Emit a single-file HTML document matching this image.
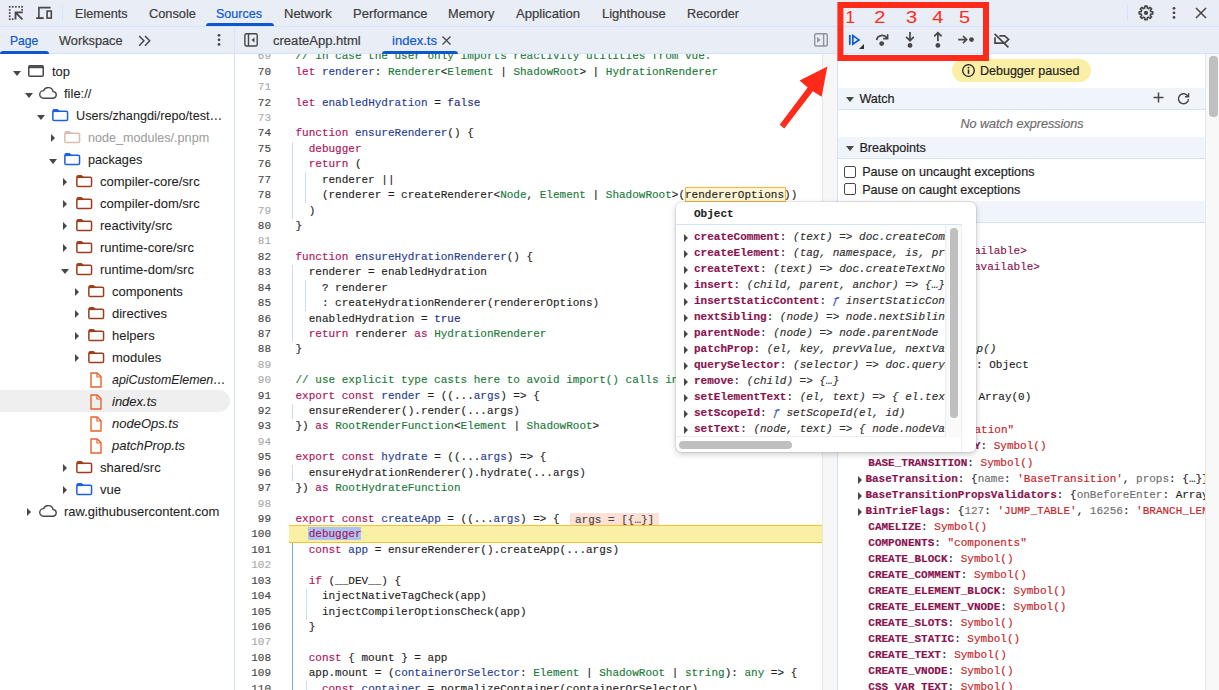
<!DOCTYPE html>
<html><head><meta charset="utf-8">
<style>
*{margin:0;padding:0;box-sizing:border-box}
html,body{width:1219px;height:690px;overflow:hidden;background:#fff;font-family:"Liberation Sans",sans-serif;color:#1f1f1f}
.tab,.sec span,.badge span,.cbt,.nowatch{-webkit-text-stroke:0.2px currentColor}
.tt{-webkit-text-stroke:0.08px currentColor}
.num,.src,.sr{-webkit-text-stroke:0.15px currentColor}
.abs{position:absolute}
#tb1{position:absolute;left:0;top:0;width:1219px;height:27px;background:#e9eef6;border-bottom:1px solid #d3e3fd}
#tb2{position:absolute;left:0;top:27px;width:1219px;height:27px;background:#e9eef6;border-bottom:1px solid #d3e3fd}
.tab{position:absolute;top:7px;font-size:12.6px;color:#3c3c3c;white-space:nowrap;line-height:14px}
.sel{color:#0b57d0}
.uline{position:absolute;height:3px;background:#0b57d0;border-radius:3px 3px 0 0}
.vsep{position:absolute;width:1px;background:#d3e3fd}
/* tree */
#tree{position:absolute;left:0;top:54px;width:234px;height:636px;background:#fff;overflow:hidden}
.tt{position:absolute;height:22px;font-size:13px;line-height:22px;white-space:nowrap;color:#1f1f1f}
.tt.faded{color:#9e9e9e}
.tt.it{font-style:italic}
.tri{position:absolute;width:0;height:0}
.tri.d{border-left:4px solid transparent;border-right:4px solid transparent;border-top:5px solid #474747}
.tri.r{border-top:4px solid transparent;border-bottom:4px solid transparent;border-left:4.5px solid #474747}
/* code */
#editor{position:absolute;left:234px;top:54px;width:603px;height:636px;background:#fff;overflow:hidden;border-left:1px solid #d3e3fd}
.num,.src{position:absolute;font-family:"Liberation Mono",monospace;font-size:11px;line-height:15.4px;white-space:pre;height:15.4px}
.num{right:566px;color:#474747;text-align:right}
.num.l{color:#ababab}
.src{left:60.5px;color:#1f1f1f}
.k{color:#b0105a}
.d{color:#1f3c96}
.ty{color:#1b7a3a}
.c{color:#1b7a3a}
.a{color:#1f2d80}
.g{position:absolute;width:1px;background:#cddcf6}
.ga{background:#7aa3f0}
.hlbox{}
.hlb{position:absolute;left:450px;top:133px;width:101px;height:14.5px;background:#fdf5d4;border:1px solid #f2b940}
.selw{}
.selb{position:absolute;left:73px;top:473px;width:53px;height:13px;background:#a9c4f3}
.curline{position:absolute;left:54px;width:533px;height:17.4px;background:#f9efa5;border-top:1px solid #f5c232;border-bottom:1px solid #f5c232}
.inl{position:absolute;left:335px;height:12.5px;padding:0 5px;background:#fde0d6;color:#474747;font-family:"Liberation Mono",monospace;font-size:11px;line-height:14.3px;white-space:pre;overflow:hidden;-webkit-text-stroke:0.15px currentColor}
#vscroll{position:absolute;left:587px;top:0;width:15px;height:636px;background:#f7f7f7;border-left:1px solid #e6e6e6}
/* right */
#right{position:absolute;left:837px;top:54px;width:382px;height:636px;background:#fff;border-left:1px solid #d3e3fd;overflow:hidden}

.badge{position:absolute;left:114px;top:5px;width:139px;height:23px;border-radius:12px;background:#fbefa5;font-size:12.8px;line-height:23px;color:#1f1f1f}
.badge span{position:absolute;left:28px;top:0.8px;font-size:12.5px}
.sec{position:absolute;left:0;width:367px;height:22px;background:#f0f4fb;border-bottom:1px solid #d3e3fd;font-size:12.8px;line-height:23px}
.sec span{position:absolute;left:21.4px;top:0;font-size:12.6px}
.stri{position:absolute;left:8.2px;top:9px;width:0;height:0;border-left:4px solid transparent;border-right:4px solid transparent;border-top:5px solid #474747}
.nowatch{position:absolute;left:0;top:55.6px;width:368px;text-align:center;font-size:12.6px;font-style:italic;color:#6e6e6e;line-height:28px}
.cb{position:absolute;left:6.2px;width:12px;height:12px;border:1px solid #474747;border-radius:2px;background:#fff}
.cbt{position:absolute;left:24.2px;font-size:12.6px;line-height:18px;white-space:nowrap}
#rscroll{position:absolute;left:367px;top:0;width:15px;height:636px;background:#f8f8f8;border-left:1px solid #e8e8e8}
#rthumb{position:absolute;left:3px;top:2px;width:8.5px;height:61px;border-radius:4px;background:#bfbfbf}
.sr{position:absolute;left:0;height:16px;font-family:"Liberation Mono",monospace;font-size:11px;line-height:16px;white-space:pre;color:#1f1f1f}
.nm{color:#881350;font-weight:bold}
.st{color:#c5221f}
.gr{color:#6e6e6e}
.itl{font-style:italic}
.str{position:absolute;width:0;height:0;border-top:4px solid transparent;border-bottom:4px solid transparent;border-left:4.3px solid #474747}

#popup{position:absolute;left:676px;top:202px;width:300px;height:250px;background:#fff;border-radius:6px;box-shadow:0 0 0 1px rgba(0,0,0,.06),0 2px 6px rgba(0,0,0,.22);overflow:hidden}
#phdr{position:absolute;left:0;top:22px;width:285px;height:1px;background:#d3e3fd}
#plist{position:absolute;left:0;top:23px;width:270px;height:212px;overflow:hidden;border-bottom:1px solid #ececec;border-right:1px solid #ececec}
#pvtrack{position:absolute;left:270px;top:23px;width:15px;height:212px;background:#fafafa}
#pvthumb{position:absolute;left:4px;top:3px;width:8px;height:190px;border-radius:4px;background:#bfbfbf}
#phthumb{position:absolute;left:3px;top:239px;width:113px;height:8px;border-radius:4px;background:#bfbfbf}
#pline{position:absolute;left:284.5px;top:22px;width:1px;height:228px;background:#efefef}
.fn{color:#1f4fbf}
</style></head><body>
<!-- TOP TOOLBAR -->
<div id="tb1">
  <svg class="abs" style="left:0;top:0" width="60" height="27" viewBox="0 0 60 27">
<g fill="#474747"><rect x="8.85" y="5.95" width="1.7" height="1.7"/><rect x="11.85" y="5.95" width="1.7" height="1.7"/><rect x="15.05" y="5.95" width="1.7" height="1.7"/><rect x="18.35" y="5.95" width="1.7" height="1.7"/><rect x="21.25" y="5.95" width="1.7" height="1.7"/><rect x="8.85" y="9.15" width="1.7" height="1.7"/><rect x="8.85" y="12.15" width="1.7" height="1.7"/><rect x="8.85" y="15.35" width="1.7" height="1.7"/><rect x="8.85" y="18.35" width="1.7" height="1.7"/><rect x="11.85" y="18.35" width="1.7" height="1.7"/><rect x="21.25" y="8.95" width="1.7" height="1.7"/></g>
<path d="M22.8 12.4H15.5V19.6M15.7 12.6L22.4 19.3" fill="none" stroke="#474747" stroke-width="1.8"/>
<path d="M38.9 18.1V7.6H50.6" fill="none" stroke="#474747" stroke-width="1.6"/>
<path d="M36.2 18.1H43.7" fill="none" stroke="#474747" stroke-width="1.9"/>
<rect x="47.1" y="11.1" width="4.2" height="7" fill="none" stroke="#474747" stroke-width="1.6"/>
</svg>
  <div class="vsep" style="left:62px;top:5px;height:16px"></div>
  <div class="tab" style="left:75px;font-size:12.6px">Elements</div>
  <div class="tab" style="left:149px;font-size:12.8px">Console</div>
  <div class="tab sel" style="left:216px;font-size:12.55px">Sources</div>
  <div class="tab" style="left:284px;font-size:13.0px">Network</div>
  <div class="tab" style="left:353px;font-size:13.0px">Performance</div>
  <div class="tab" style="left:448px;font-size:12.85px">Memory</div>
  <div class="tab" style="left:516px;font-size:13.1px">Application</div>
  <div class="tab" style="left:602px;font-size:13.0px">Lighthouse</div>
  <div class="tab" style="left:687px;font-size:12.65px">Recorder</div>
  <div class="uline" style="left:206px;top:23px;width:68px"></div>
  <div class="vsep" style="left:1127px;top:5px;height:16px"></div>
  <svg class="abs" style="left:0;top:0" width="1219" height="27" viewBox="0 0 1219 27"><path d="M1150.84 11.64 L1152.81 11.78 L1152.81 14.02 L1150.84 14.16 L1150.31 15.43 L1151.61 16.92 L1150.02 18.51 L1148.53 17.21 L1147.26 17.74 L1147.12 19.71 L1144.88 19.71 L1144.74 17.74 L1143.47 17.21 L1141.98 18.51 L1140.39 16.92 L1141.69 15.43 L1141.16 14.16 L1139.19 14.02 L1139.19 11.78 L1141.16 11.64 L1141.69 10.37 L1140.39 8.88 L1141.98 7.29 L1143.47 8.59 L1144.74 8.06 L1144.88 6.09 L1147.12 6.09 L1147.26 8.06 L1148.53 8.59 L1150.02 7.29 L1151.61 8.88 L1150.31 10.37Z" fill="none" stroke="#474747" stroke-width="1.6" stroke-linejoin="round"/><circle cx="1146" cy="12.9" r="2.1" fill="#474747"/></svg>
  <svg class="abs" style="left:1171px;top:6px" width="6" height="14" viewBox="0 0 6 14" fill="#474747"><circle cx="3" cy="2.3" r="1.4"/><circle cx="3" cy="6.8" r="1.4"/><circle cx="3" cy="11.4" r="1.4"/></svg>
  <svg class="abs" style="left:1195px;top:7px" width="12" height="12" viewBox="0 0 12 12" stroke="#474747" stroke-width="1.5"><path d="M1 1l10 10M11 1L1 11"/></svg>
</div>

<!-- SECOND ROW -->
<div id="tb2">
  <div class="tab sel" style="left:10px;top:7px;font-size:12.1px">Page</div>
  <div class="tab" style="left:59px;top:7px;font-size:12.75px">Workspace</div>
  <svg class="abs" style="left:137.5px;top:7.5px" width="14" height="12" viewBox="0 0 14 12" fill="none" stroke="#474747" stroke-width="1.5"><path d="M1.2 0.9l4.7 4.9-4.7 4.9M7 0.9l4.7 4.9-4.7 4.9"/></svg>
  <svg class="abs" style="left:216px;top:6.3px" width="6" height="14" viewBox="0 0 6 14" fill="#474747"><circle cx="3" cy="2.3" r="1.4"/><circle cx="3" cy="6.8" r="1.4"/><circle cx="3" cy="11.4" r="1.4"/></svg>
  <div class="uline" style="left:0;top:24px;width:49px"></div>
  <div class="vsep" style="left:234px;top:0;height:27px"></div>
  <svg class="abs" style="left:244px;top:6px" width="15" height="14" viewBox="0 0 15 14" fill="none" stroke="#474747" stroke-width="1.4"><rect x="0.9" y="0.7" width="12.3" height="12.3" rx="1.5"/><path d="M4.5 1v12"/><path d="M10.5 4.5v5l-3-2.5z" fill="#474747" stroke="none"/></svg>
  <div class="tab" style="left:273px;top:7px;font-size:13.05px">createApp.html</div>
  <div class="tab sel" style="left:392px;top:7px;font-size:13.05px">index.ts</div>
  <svg class="abs" style="left:442px;top:9px" width="9" height="9" viewBox="0 0 9 9" stroke="#474747" stroke-width="1.3"><path d="M0.5 0.5l8 8M8.5 0.5l-8 8"/></svg>
  <div class="uline" style="left:382px;top:24px;width:76px"></div>
  <svg class="abs" style="left:814px;top:6px" width="15" height="14" viewBox="0 0 15 14" fill="none" stroke="#909399" stroke-width="1.4"><rect x="0.7" y="0.7" width="12.6" height="12.3" rx="1.5"/><path d="M9.6 1v12"/><path d="M3.1 3.8v6.2l3.4-3.1z" fill="#909399" stroke="none"/></svg>
</div>

<div id="tree"><div class="tri d" style="left:13px;top:17px"></div><div class="abs" style="left:28px;top:11px;line-height:0"><svg width="16" height="12" viewBox="0 0 16 12" fill="none" stroke="#474747" stroke-width="1.5"><rect x="0.75" y="0.75" width="14.5" height="10.5" rx="1.2"/><path d="M0.75 2.2h14.5" stroke-width="2"/></svg></div><div class="tt" style="left:52px;top:7px">top</div>
<div class="tri d" style="left:25px;top:39px"></div><div class="abs" style="left:39px;top:33px;line-height:0"><svg width="18" height="12" viewBox="0 0 18 12" fill="none" stroke="#474747" stroke-width="1.4"><path d="M4.5 11.2h9.2a3.3 3.3 0 0 0 .4-6.6A5 5 0 0 0 4.6 3.6 3.8 3.8 0 0 0 4.5 11.2z" stroke-linejoin="round"/></svg></div><div class="tt" style="left:64px;top:29px">file://</div>
<div class="tri d" style="left:37px;top:61px"></div><div class="abs" style="left:52px;top:55px;line-height:0"><svg width="17" height="13" viewBox="0 0 17 13" fill="none" stroke="#1a5fe0" stroke-width="1.5"><rect x="0.85" y="2.3" width="14.7" height="9.3" rx="1.3"/><path d="M0.85 2.6V1.6Q0.85 0.6 1.8 0.6H5.9L7.6 2.6Z" fill="#1a5fe0" stroke-width="1" stroke-linejoin="round"/></svg></div><div class="tt" style="left:76px;top:51px;font-size:12.65px">Users/zhangdi/repo/test…</div>
<div class="tri r" style="left:51px;top:80px"></div><div class="abs" style="left:64px;top:77px;line-height:0"><svg width="17" height="13" viewBox="0 0 17 13" fill="none" stroke="#dcbcb0" stroke-width="1.5"><rect x="0.85" y="2.3" width="14.7" height="9.3" rx="1.3"/><path d="M0.85 2.6V1.6Q0.85 0.6 1.8 0.6H5.9L7.6 2.6Z" fill="#dcbcb0" stroke-width="1" stroke-linejoin="round"/></svg></div><div class="tt faded" style="left:88px;top:73px;font-size:12.6px">node_modules/.pnpm</div>
<div class="tri d" style="left:49px;top:105px"></div><div class="abs" style="left:64px;top:99px;line-height:0"><svg width="17" height="13" viewBox="0 0 17 13" fill="none" stroke="#1a5fe0" stroke-width="1.5"><rect x="0.85" y="2.3" width="14.7" height="9.3" rx="1.3"/><path d="M0.85 2.6V1.6Q0.85 0.6 1.8 0.6H5.9L7.6 2.6Z" fill="#1a5fe0" stroke-width="1" stroke-linejoin="round"/></svg></div><div class="tt" style="left:88px;top:95px;font-size:12.7px">packages</div>
<div class="tri r" style="left:63px;top:124px"></div><div class="abs" style="left:76px;top:121px;line-height:0"><svg width="17" height="13" viewBox="0 0 17 13" fill="none" stroke="#9c3d1c" stroke-width="1.5"><rect x="0.85" y="2.3" width="14.7" height="9.3" rx="1.3"/><path d="M0.85 2.6V1.6Q0.85 0.6 1.8 0.6H5.9L7.6 2.6Z" fill="#9c3d1c" stroke-width="1" stroke-linejoin="round"/></svg></div><div class="tt" style="left:100px;top:117px">compiler-core/src</div>
<div class="tri r" style="left:63px;top:146px"></div><div class="abs" style="left:76px;top:143px;line-height:0"><svg width="17" height="13" viewBox="0 0 17 13" fill="none" stroke="#9c3d1c" stroke-width="1.5"><rect x="0.85" y="2.3" width="14.7" height="9.3" rx="1.3"/><path d="M0.85 2.6V1.6Q0.85 0.6 1.8 0.6H5.9L7.6 2.6Z" fill="#9c3d1c" stroke-width="1" stroke-linejoin="round"/></svg></div><div class="tt" style="left:100px;top:139px">compiler-dom/src</div>
<div class="tri r" style="left:63px;top:168px"></div><div class="abs" style="left:76px;top:165px;line-height:0"><svg width="17" height="13" viewBox="0 0 17 13" fill="none" stroke="#9c3d1c" stroke-width="1.5"><rect x="0.85" y="2.3" width="14.7" height="9.3" rx="1.3"/><path d="M0.85 2.6V1.6Q0.85 0.6 1.8 0.6H5.9L7.6 2.6Z" fill="#9c3d1c" stroke-width="1" stroke-linejoin="round"/></svg></div><div class="tt" style="left:100px;top:161px">reactivity/src</div>
<div class="tri r" style="left:63px;top:190px"></div><div class="abs" style="left:76px;top:187px;line-height:0"><svg width="17" height="13" viewBox="0 0 17 13" fill="none" stroke="#9c3d1c" stroke-width="1.5"><rect x="0.85" y="2.3" width="14.7" height="9.3" rx="1.3"/><path d="M0.85 2.6V1.6Q0.85 0.6 1.8 0.6H5.9L7.6 2.6Z" fill="#9c3d1c" stroke-width="1" stroke-linejoin="round"/></svg></div><div class="tt" style="left:100px;top:183px">runtime-core/src</div>
<div class="tri d" style="left:61px;top:215px"></div><div class="abs" style="left:76px;top:209px;line-height:0"><svg width="17" height="13" viewBox="0 0 17 13" fill="none" stroke="#9c3d1c" stroke-width="1.5"><rect x="0.85" y="2.3" width="14.7" height="9.3" rx="1.3"/><path d="M0.85 2.6V1.6Q0.85 0.6 1.8 0.6H5.9L7.6 2.6Z" fill="#9c3d1c" stroke-width="1" stroke-linejoin="round"/></svg></div><div class="tt" style="left:100px;top:205px">runtime-dom/src</div>
<div class="tri r" style="left:75px;top:234px"></div><div class="abs" style="left:88px;top:231px;line-height:0"><svg width="17" height="13" viewBox="0 0 17 13" fill="none" stroke="#9c3d1c" stroke-width="1.5"><rect x="0.85" y="2.3" width="14.7" height="9.3" rx="1.3"/><path d="M0.85 2.6V1.6Q0.85 0.6 1.8 0.6H5.9L7.6 2.6Z" fill="#9c3d1c" stroke-width="1" stroke-linejoin="round"/></svg></div><div class="tt" style="left:112px;top:227px">components</div>
<div class="tri r" style="left:75px;top:256px"></div><div class="abs" style="left:88px;top:253px;line-height:0"><svg width="17" height="13" viewBox="0 0 17 13" fill="none" stroke="#9c3d1c" stroke-width="1.5"><rect x="0.85" y="2.3" width="14.7" height="9.3" rx="1.3"/><path d="M0.85 2.6V1.6Q0.85 0.6 1.8 0.6H5.9L7.6 2.6Z" fill="#9c3d1c" stroke-width="1" stroke-linejoin="round"/></svg></div><div class="tt" style="left:112px;top:249px">directives</div>
<div class="tri r" style="left:75px;top:278px"></div><div class="abs" style="left:88px;top:275px;line-height:0"><svg width="17" height="13" viewBox="0 0 17 13" fill="none" stroke="#9c3d1c" stroke-width="1.5"><rect x="0.85" y="2.3" width="14.7" height="9.3" rx="1.3"/><path d="M0.85 2.6V1.6Q0.85 0.6 1.8 0.6H5.9L7.6 2.6Z" fill="#9c3d1c" stroke-width="1" stroke-linejoin="round"/></svg></div><div class="tt" style="left:112px;top:271px">helpers</div>
<div class="tri r" style="left:75px;top:300px"></div><div class="abs" style="left:88px;top:297px;line-height:0"><svg width="17" height="13" viewBox="0 0 17 13" fill="none" stroke="#9c3d1c" stroke-width="1.5"><rect x="0.85" y="2.3" width="14.7" height="9.3" rx="1.3"/><path d="M0.85 2.6V1.6Q0.85 0.6 1.8 0.6H5.9L7.6 2.6Z" fill="#9c3d1c" stroke-width="1" stroke-linejoin="round"/></svg></div><div class="tt" style="left:112px;top:293px">modules</div>
<div class="abs" style="left:90px;top:318px;line-height:0"><svg width="12" height="16" viewBox="0 0 12 16" fill="none" stroke="#e8632b" stroke-width="1.4"><path d="M1 1h6.3L11 4.7V15H1z" stroke-linejoin="round"/><path d="M7 1v4h4" stroke-width="1.2"/></svg></div><div class="tt it" style="left:112px;top:315px;font-size:12.4px">apiCustomElemen…</div>
<div class="abs" style="left:0;top:336px;width:230px;height:22px;background:#efefef;border-radius:0 11px 11px 0"></div><div class="abs" style="left:90px;top:340px;line-height:0"><svg width="12" height="16" viewBox="0 0 12 16" fill="none" stroke="#e8632b" stroke-width="1.4"><path d="M1 1h6.3L11 4.7V15H1z" stroke-linejoin="round"/><path d="M7 1v4h4" stroke-width="1.2"/></svg></div><div class="tt it" style="left:112px;top:337px">index.ts</div>
<div class="abs" style="left:90px;top:362px;line-height:0"><svg width="12" height="16" viewBox="0 0 12 16" fill="none" stroke="#e8632b" stroke-width="1.4"><path d="M1 1h6.3L11 4.7V15H1z" stroke-linejoin="round"/><path d="M7 1v4h4" stroke-width="1.2"/></svg></div><div class="tt it" style="left:112px;top:359px">nodeOps.ts</div>
<div class="abs" style="left:90px;top:384px;line-height:0"><svg width="12" height="16" viewBox="0 0 12 16" fill="none" stroke="#e8632b" stroke-width="1.4"><path d="M1 1h6.3L11 4.7V15H1z" stroke-linejoin="round"/><path d="M7 1v4h4" stroke-width="1.2"/></svg></div><div class="tt it" style="left:112px;top:381px">patchProp.ts</div>
<div class="tri r" style="left:63px;top:410px"></div><div class="abs" style="left:76px;top:407px;line-height:0"><svg width="17" height="13" viewBox="0 0 17 13" fill="none" stroke="#9c3d1c" stroke-width="1.5"><rect x="0.85" y="2.3" width="14.7" height="9.3" rx="1.3"/><path d="M0.85 2.6V1.6Q0.85 0.6 1.8 0.6H5.9L7.6 2.6Z" fill="#9c3d1c" stroke-width="1" stroke-linejoin="round"/></svg></div><div class="tt" style="left:100px;top:403px">shared/src</div>
<div class="tri r" style="left:63px;top:432px"></div><div class="abs" style="left:76px;top:429px;line-height:0"><svg width="17" height="13" viewBox="0 0 17 13" fill="none" stroke="#1a5fe0" stroke-width="1.5"><rect x="0.85" y="2.3" width="14.7" height="9.3" rx="1.3"/><path d="M0.85 2.6V1.6Q0.85 0.6 1.8 0.6H5.9L7.6 2.6Z" fill="#1a5fe0" stroke-width="1" stroke-linejoin="round"/></svg></div><div class="tt" style="left:100px;top:425px">vue</div>
<div class="tri r" style="left:27px;top:454px"></div><div class="abs" style="left:39px;top:451px;line-height:0"><svg width="18" height="12" viewBox="0 0 18 12" fill="none" stroke="#474747" stroke-width="1.4"><path d="M4.5 11.2h9.2a3.3 3.3 0 0 0 .4-6.6A5 5 0 0 0 4.6 3.6 3.8 3.8 0 0 0 4.5 11.2z" stroke-linejoin="round"/></svg></div><div class="tt" style="left:64px;top:447px">raw.githubusercontent.com</div></div><div id="editor"><div class="g" style="left:57.39999999999998px;top:87.60px;height:77.10px"></div><div class="g" style="left:69.80000000000001px;top:118.44px;height:30.84px"></div><div class="g" style="left:57.39999999999998px;top:210.96px;height:77.10px"></div><div class="g" style="left:69.80000000000001px;top:226.38px;height:30.84px"></div><div class="g" style="left:57.39999999999998px;top:349.74px;height:15.42px"></div><div class="g" style="left:57.39999999999998px;top:411.42px;height:15.42px"></div><div class="g ga" style="left:57.39999999999998px;top:473.10px;height:185.04px"></div><div class="g" style="left:71.39999999999998px;top:534.78px;height:30.84px"></div><div class="g" style="left:71.39999999999998px;top:627.30px;height:30.84px"></div><div class="curline" style="top:471.2px"></div><div class="hlb"></div><div class="selb"></div><div class="inl" style="top:458.98px">args = [{…}]</div><div class="num l" style="top:-4.62px">69</div><div class="src" style="top:-4.62px"><span class="c">// in case the user only imports reactivity utilities from Vue.</span></div>
<div class="num" style="top:10.80px">70</div><div class="src" style="top:10.80px"><span class="k">let</span> <span class="d">renderer</span>: <span class="ty">Renderer</span>&lt;<span class="ty">Element</span> | <span class="ty">ShadowRoot</span>&gt; | <span class="ty">HydrationRenderer</span></div>
<div class="num l" style="top:26.22px">71</div><div class="src" style="top:26.22px"></div>
<div class="num" style="top:41.64px">72</div><div class="src" style="top:41.64px"><span class="k">let</span> <span class="d">enabledHydration</span> = <span class="a">false</span></div>
<div class="num l" style="top:57.06px">73</div><div class="src" style="top:57.06px"></div>
<div class="num" style="top:72.48px">74</div><div class="src" style="top:72.48px"><span class="k">function</span> <span class="d">ensureRenderer</span>() {</div>
<div class="num" style="top:87.90px">75</div><div class="src" style="top:87.90px">  <span class="k">debugger</span></div>
<div class="num" style="top:103.32px">76</div><div class="src" style="top:103.32px">  <span class="k">return</span> (</div>
<div class="num" style="top:118.74px">77</div><div class="src" style="top:118.74px">    renderer ||</div>
<div class="num" style="top:134.16px">78</div><div class="src" style="top:134.16px">    (renderer = createRenderer&lt;<span class="ty">Node</span>, <span class="ty">Element</span> | <span class="ty">ShadowRoot</span>&gt;(<span class="hlbox">rendererOptions</span>))</div>
<div class="num l" style="top:149.58px">79</div><div class="src" style="top:149.58px">  )</div>
<div class="num" style="top:165.00px">80</div><div class="src" style="top:165.00px">}</div>
<div class="num l" style="top:180.42px">81</div><div class="src" style="top:180.42px"></div>
<div class="num" style="top:195.84px">82</div><div class="src" style="top:195.84px"><span class="k">function</span> <span class="d">ensureHydrationRenderer</span>() {</div>
<div class="num" style="top:211.26px">83</div><div class="src" style="top:211.26px">  renderer = enabledHydration</div>
<div class="num" style="top:226.68px">84</div><div class="src" style="top:226.68px">    ? renderer</div>
<div class="num" style="top:242.10px">85</div><div class="src" style="top:242.10px">    : createHydrationRenderer(rendererOptions)</div>
<div class="num" style="top:257.52px">86</div><div class="src" style="top:257.52px">  enabledHydration = <span class="a">true</span></div>
<div class="num" style="top:272.94px">87</div><div class="src" style="top:272.94px">  <span class="k">return</span> renderer <span class="k">as</span> <span class="ty">HydrationRenderer</span></div>
<div class="num" style="top:288.36px">88</div><div class="src" style="top:288.36px">}</div>
<div class="num l" style="top:303.78px">89</div><div class="src" style="top:303.78px"></div>
<div class="num l" style="top:319.20px">90</div><div class="src" style="top:319.20px"><span class="c">// use explicit type casts here to avoid import() calls in rolled-up d.ts</span></div>
<div class="num" style="top:334.62px">91</div><div class="src" style="top:334.62px"><span class="k">export</span> <span class="k">const</span> <span class="d">render</span> = ((...<span class="d">args</span>) =&gt; {</div>
<div class="num" style="top:350.04px">92</div><div class="src" style="top:350.04px">  ensureRenderer().render(...args)</div>
<div class="num" style="top:365.46px">93</div><div class="src" style="top:365.46px">}) <span class="k">as</span> <span class="ty">RootRenderFunction</span>&lt;<span class="ty">Element</span> | <span class="ty">ShadowRoot</span>&gt;</div>
<div class="num l" style="top:380.88px">94</div><div class="src" style="top:380.88px"></div>
<div class="num" style="top:396.30px">95</div><div class="src" style="top:396.30px"><span class="k">export</span> <span class="k">const</span> <span class="d">hydrate</span> = ((...<span class="d">args</span>) =&gt; {</div>
<div class="num" style="top:411.72px">96</div><div class="src" style="top:411.72px">  ensureHydrationRenderer().hydrate(...args)</div>
<div class="num" style="top:427.14px">97</div><div class="src" style="top:427.14px">}) <span class="k">as</span> <span class="ty">RootHydrateFunction</span></div>
<div class="num l" style="top:442.56px">98</div><div class="src" style="top:442.56px"></div>
<div class="num" style="top:457.98px">99</div><div class="src" style="top:457.98px"><span class="k">export</span> <span class="k">const</span> <span class="d">createApp</span> = ((...<span class="d">args</span>) =&gt; {</div>
<div class="num" style="top:473.40px">100</div><div class="src" style="top:473.40px">  <span class="selw"><span class="k">debugger</span></span></div>
<div class="num" style="top:488.82px">101</div><div class="src" style="top:488.82px">  <span class="k">const</span> <span class="d">app</span> = ensureRenderer().createApp(...args)</div>
<div class="num l" style="top:504.24px">102</div><div class="src" style="top:504.24px"></div>
<div class="num" style="top:519.66px">103</div><div class="src" style="top:519.66px">  <span class="k">if</span> (__DEV__) {</div>
<div class="num" style="top:535.08px">104</div><div class="src" style="top:535.08px">    injectNativeTagCheck(app)</div>
<div class="num" style="top:550.50px">105</div><div class="src" style="top:550.50px">    injectCompilerOptionsCheck(app)</div>
<div class="num" style="top:565.92px">106</div><div class="src" style="top:565.92px">  }</div>
<div class="num l" style="top:581.34px">107</div><div class="src" style="top:581.34px"></div>
<div class="num" style="top:596.76px">108</div><div class="src" style="top:596.76px">  <span class="k">const</span> { mount } = app</div>
<div class="num" style="top:612.18px">109</div><div class="src" style="top:612.18px">  app.mount = (<span class="d">containerOrSelector</span>: <span class="ty">Element</span> | <span class="ty">ShadowRoot</span> | <span class="ty">string</span>): <span class="ty">any</span> =&gt; {</div>
<div class="num" style="top:627.60px">110</div><div class="src" style="top:627.60px">    <span class="k">const</span> <span class="d">container</span> = normalizeContainer(containerOrSelector)</div>
<div class="num" style="top:643.02px">111</div><div class="src" style="top:643.02px">    <span class="k">if</span> (!container) <span class="k">return</span></div><div id="vscroll"></div></div><div id="right">
  <div class="badge"><svg class="abs" style="left:10px;top:5px" width="13" height="13" viewBox="0 0 13 13" fill="none" stroke="#1f1f1f" stroke-width="1.3"><circle cx="6.5" cy="6.5" r="5.8"/><path d="M6.5 5.6v4.2" stroke-width="1.5"/><circle cx="6.5" cy="3.7" r="0.9" fill="#1f1f1f" stroke="none"/></svg><span>Debugger paused</span></div>
  <div class="sec" style="top:34px"><div class="stri"></div><span>Watch</span>
    <svg class="abs" style="left:315.3px;top:4.4px" width="11" height="11" viewBox="0 0 11 11" stroke="#474747" stroke-width="1.5"><path d="M5.5 0.5v10M0.5 5.5h10"/></svg>
    <svg class="abs" style="left:338.5px;top:3.5px" width="13" height="13" viewBox="0 0 13 13" fill="none" stroke="#474747" stroke-width="1.4"><path d="M10.8 4.2A5 5 0 1 0 11.5 7"/><path d="M11.6 1.2v3.6H8" fill="none"/></svg>
  </div>
  <div class="nowatch">No watch expressions</div>
  <div class="sec" style="top:83px"><div class="stri"></div><span>Breakpoints</span></div>
  <div class="cb" style="top:111.6px"></div><div class="cbt" style="top:109px">Pause on uncaught exceptions</div>
  <div class="cb" style="top:129px"></div><div class="cbt" style="top:126.6px">Pause on caught exceptions</div>
  <div class="sec" style="top:147px"><div class="stri"></div><span>Scope</span></div>
  <div class="sr" style="left:27.4px;top:172.67px"><span class="nm">args</span>: (1) [{…}]</div><div class="str" style="left:19.9px;top:178.07px"></div>
<div class="sr" style="left:30.3px;top:188.67px"><span class="nm">app</span>: <span class="nm" style="font-weight:normal">&lt;value unavailable&gt;</span></div>
<div class="sr" style="left:30.3px;top:204.77px"><span class="nm">mount</span>: <span class="nm" style="font-weight:normal">&lt;value unavailable&gt;</span></div>
<div class="sr" style="left:72.6px;top:286.67px"><span class="itl">ƒ createApp()</span></div>
<div class="sr" style="left:138.0px;top:302.77px">: Object</div>
<div class="sr" style="left:140.5px;top:334.67px">Array(0)</div>
<div class="sr" style="left:136.5px;top:368.27px"><span class="st">ation"</span></div>
<div class="sr" style="left:135.9px;top:384.47px"><span class="nm">Y</span>: <span class="st">Symbol()</span></div>
<div class="sr" style="left:30.3px;top:400.77px"><span class="nm">BASE_TRANSITION</span>: <span class="st">Symbol()</span></div>
<div class="sr" style="left:27.4px;top:416.67px"><span class="nm">BaseTransition</span>: {<span class="gr">name</span>: <span class="st">'BaseTransition'</span>, <span class="gr">props</span>: {…}}</div><div class="str" style="left:19.9px;top:422.07px"></div>
<div class="sr" style="left:27.4px;top:432.67px"><span class="nm">BaseTransitionPropsValidators</span>: {<span class="gr">onBeforeEnter</span>: Array(2), <span class="gr">onEnter</span>: Array(2)}</div><div class="str" style="left:19.9px;top:438.07px"></div>
<div class="sr" style="left:27.4px;top:448.67px"><span class="nm">BinTrieFlags</span>: {<span class="gr">127</span>: <span class="st">'JUMP_TABLE'</span>, <span class="gr">16256</span>: <span class="st">'BRANCH_LENGTH'</span>}</div><div class="str" style="left:19.9px;top:454.07px"></div>
<div class="sr" style="left:30.3px;top:464.67px"><span class="nm">CAMELIZE</span>: <span class="st">Symbol()</span></div>
<div class="sr" style="left:30.3px;top:480.67px"><span class="nm">COMPONENTS</span>: <span class="st">"components"</span></div>
<div class="sr" style="left:30.3px;top:496.67px"><span class="nm">CREATE_BLOCK</span>: <span class="st">Symbol()</span></div>
<div class="sr" style="left:30.3px;top:512.67px"><span class="nm">CREATE_COMMENT</span>: <span class="st">Symbol()</span></div>
<div class="sr" style="left:30.3px;top:528.67px"><span class="nm">CREATE_ELEMENT_BLOCK</span>: <span class="st">Symbol()</span></div>
<div class="sr" style="left:30.3px;top:544.67px"><span class="nm">CREATE_ELEMENT_VNODE</span>: <span class="st">Symbol()</span></div>
<div class="sr" style="left:30.3px;top:560.67px"><span class="nm">CREATE_SLOTS</span>: <span class="st">Symbol()</span></div>
<div class="sr" style="left:30.3px;top:576.67px"><span class="nm">CREATE_STATIC</span>: <span class="st">Symbol()</span></div>
<div class="sr" style="left:30.3px;top:592.67px"><span class="nm">CREATE_TEXT</span>: <span class="st">Symbol()</span></div>
<div class="sr" style="left:30.3px;top:608.67px"><span class="nm">CREATE_VNODE</span>: <span class="st">Symbol()</span></div>
<div class="sr" style="left:30.3px;top:624.67px"><span class="nm">CSS_VAR_TEXT</span>: <span class="st">Symbol()</span></div>
  <div id="rscroll"><div id="rthumb"></div></div>
</div>
<div id="popup"><div class="sr" style="left:18px;top:3.57px;font-weight:bold;color:#1f1f1f">Object</div><div id="phdr"></div><div id="plist"><div class="str" style="left:8px;top:9.07px"></div><div class="sr" style="left:18px;top:3.77px"><span class="nm">createComment</span>: <span class="itl" style="color:#303030">(text) =&gt; doc.createComment(text)</span></div><div class="str" style="left:8px;top:25.07px"></div><div class="sr" style="left:18px;top:19.77px"><span class="nm">createElement</span>: <span class="itl" style="color:#303030">(tag, namespace, is, props) =&gt; {…}</span></div><div class="str" style="left:8px;top:41.07px"></div><div class="sr" style="left:18px;top:35.77px"><span class="nm">createText</span>: <span class="itl" style="color:#303030">(text) =&gt; doc.createTextNode(text)</span></div><div class="str" style="left:8px;top:57.07px"></div><div class="sr" style="left:18px;top:51.77px"><span class="nm">insert</span>: <span class="itl" style="color:#303030">(child, parent, anchor) =&gt; {…}</span></div><div class="str" style="left:8px;top:73.07px"></div><div class="sr" style="left:18px;top:67.77px"><span class="nm">insertStaticContent</span>: <span class="itl" style="color:#303030"><span class="fn">ƒ</span> insertStaticContent(content, parent, anchor, namespace, start, end)</span></div><div class="str" style="left:8px;top:89.07px"></div><div class="sr" style="left:18px;top:83.77px"><span class="nm">nextSibling</span>: <span class="itl" style="color:#303030">(node) =&gt; node.nextSibling</span></div><div class="str" style="left:8px;top:105.07px"></div><div class="sr" style="left:18px;top:99.77px"><span class="nm">parentNode</span>: <span class="itl" style="color:#303030">(node) =&gt; node.parentNode</span></div><div class="str" style="left:8px;top:121.07px"></div><div class="sr" style="left:18px;top:115.77px"><span class="nm">patchProp</span>: <span class="itl" style="color:#303030">(el, key, prevValue, nextValue, namespace, parentComponent) =&gt; {…}</span></div><div class="str" style="left:8px;top:137.07px"></div><div class="sr" style="left:18px;top:131.77px"><span class="nm">querySelector</span>: <span class="itl" style="color:#303030">(selector) =&gt; doc.querySelector(selector)</span></div><div class="str" style="left:8px;top:153.07px"></div><div class="sr" style="left:18px;top:147.77px"><span class="nm">remove</span>: <span class="itl" style="color:#303030">(child) =&gt; {…}</span></div><div class="str" style="left:8px;top:169.07px"></div><div class="sr" style="left:18px;top:163.77px"><span class="nm">setElementText</span>: <span class="itl" style="color:#303030">(el, text) =&gt; { el.textContent = text }</span></div><div class="str" style="left:8px;top:185.07px"></div><div class="sr" style="left:18px;top:179.77px"><span class="nm">setScopeId</span>: <span class="itl" style="color:#303030"><span class="fn">ƒ</span> setScopeId(el, id)</span></div><div class="str" style="left:8px;top:201.07px"></div><div class="sr" style="left:18px;top:195.77px"><span class="nm">setText</span>: <span class="itl" style="color:#303030">(node, text) =&gt; { node.nodeValue = text }</span></div></div><div id="pvtrack"><div id="pvthumb"></div></div><div id="phthumb"></div><div id="pline"></div></div><svg class="abs" style="left:0;top:0;pointer-events:none" width="1219" height="690" viewBox="0 0 1219 690">
  <!-- debugger toolbar icons -->
  <g fill="none" stroke="#0b57d0" stroke-width="1.7">
    <path d="M849.8 34.9v9.9"/>
    <path d="M852.8 35.6v8.6l6.2-4.3z" stroke-linejoin="miter"/>
  </g>
  <path d="M864 44v5h-5z" fill="#303030"/>
  <g fill="none" stroke="#474747" stroke-width="1.7">
    <path d="M876.6 40.2a5.6 5.6 0 0 1 10.2-2.2"/>
    <path d="M883.2 38.6h4.4v-4.4"/>
    <path d="M910 32v8.5M906.2 36.9l3.8 3.8 3.8-3.8"/>
    <path d="M937.9 33v8.2M934.2 36.4l3.7-3.7 3.7 3.7"/>
    <path d="M958.2 39.6h8.2M963 36l3.6 3.6-3.6 3.6"/>
    <path d="M995 37.2v6h9.6l4-3.8-4-3.6h-5.2"/>
    <path d="M994.6 33.8l13.8 13.6"/>
  </g>
  <g fill="#474747">
    <circle cx="881.7" cy="43.6" r="2.4"/>
    <circle cx="910" cy="45.4" r="2.4"/>
    <circle cx="937.9" cy="45.4" r="2.4"/>
    <circle cx="971.5" cy="39.6" r="2.4"/>
  </g>
  <!-- red box -->
  <rect x="840.4" y="5" width="145.6" height="53" fill="none" stroke="#ff2a1a" stroke-width="6"/>
  <g fill="#ff2a1a" font-family="Liberation Sans" font-size="17">
    <text transform="translate(845.5 22.9)">1</text>
    <text transform="translate(874.3 22.9) scale(1.18 1)">2</text>
    <text transform="translate(906.1 22.9) scale(1.18 1)">3</text>
    <text transform="translate(932.3 22.9) scale(1.18 1)">4</text>
    <text transform="translate(959.1 22.9) scale(1.18 1)">5</text>
  </g>
  <!-- arrow -->
  <path d="M827.4 66.6L799.6 80.5L807.7 87.5L779.7 124.8L784.3 128.6L812.9 91.3L821.6 96.7Z" fill="#ff2a1a"/>
</svg>
</body></html>
